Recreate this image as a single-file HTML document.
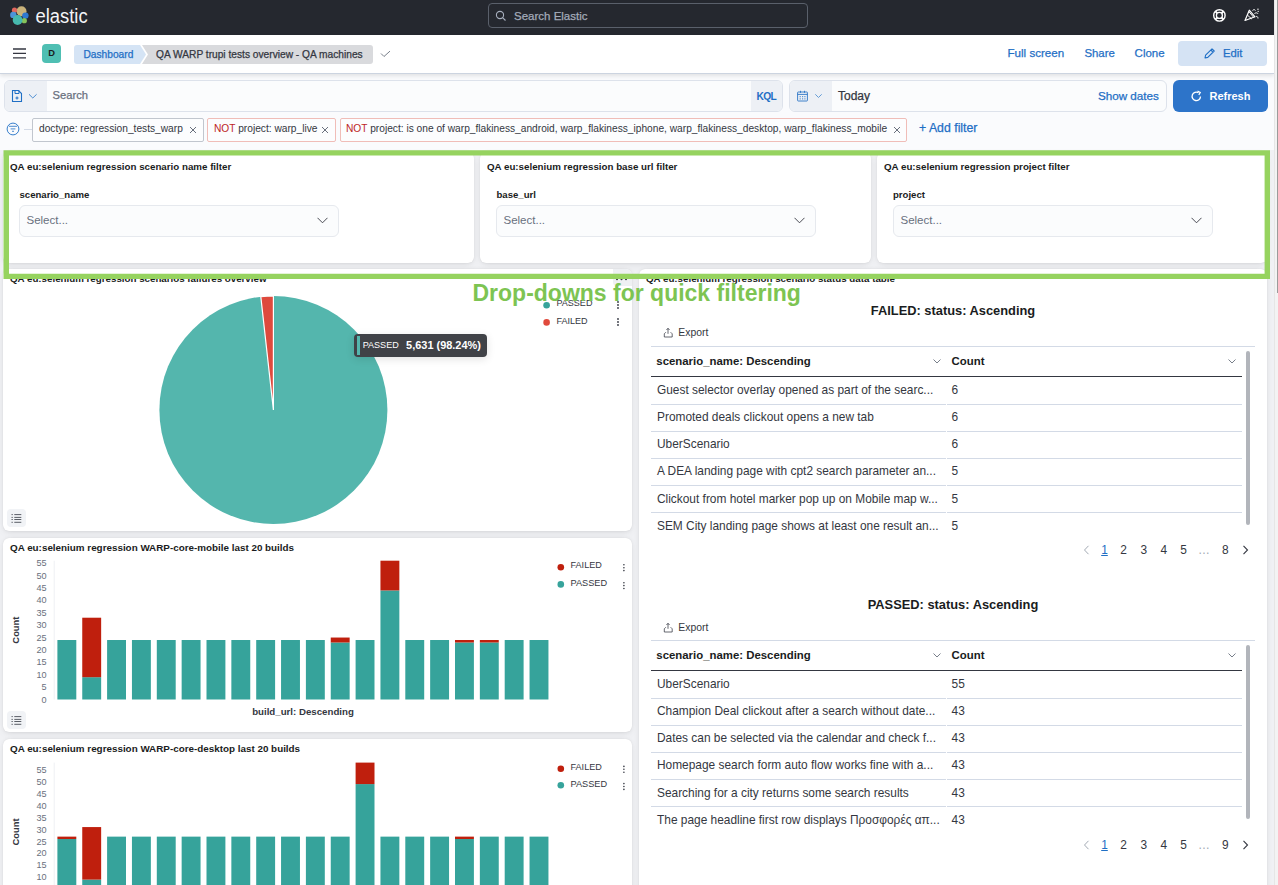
<!DOCTYPE html>
<html><head><meta charset="utf-8">
<style>
*{box-sizing:border-box;margin:0;padding:0}
html,body{width:1278px;height:885px;overflow:hidden}
body{position:relative;font-family:"Liberation Sans",sans-serif;background:#F0F1F4;color:#343741}
.a{position:absolute}
.nw{white-space:nowrap}
.panel{position:absolute;background:#fff;border-radius:6px;box-shadow:0 0.9px 4px -1px rgba(0,0,0,.08),0 2.6px 8px -1px rgba(0,0,0,.06),0 0 1px rgba(0,0,0,.1)}
.ptitle{position:absolute;font-size:9.75px;font-weight:700;color:#1A1C21;white-space:nowrap;line-height:14px}
.lbl{position:absolute;font-size:9.6px;font-weight:700;color:#1A1C21;white-space:nowrap;line-height:14px}
.sel{position:absolute;width:320px;height:31.5px;background:#FBFCFD;border:1px solid #E6E9EE;border-radius:6px}
.sel span{position:absolute;left:6.5px;top:7.2px;font-size:11.5px;color:#69707D;line-height:15px}
.sel svg{position:absolute;right:10px;top:11px}
.blue{color:#0B64B4}
.med{-webkit-text-stroke:0.25px currentColor}
</style></head><body>

<!-- ===== Top dark header ===== -->
<div class="a" style="left:0;top:0;width:1274px;height:35px;background:#25282F"></div>
<svg class="a" style="left:9px;top:5px" width="22" height="22" viewBox="0 0 22 22">
  <circle cx="12.5" cy="6.3" r="5" fill="#C9B27A"/>
  <circle cx="5.5" cy="5.2" r="2.6" fill="#E0675E"/>
  <circle cx="4.3" cy="9.9" r="3.2" fill="#4D93D9"/>
  <circle cx="16.4" cy="10.6" r="3.2" fill="#2F78D0"/>
  <circle cx="15.3" cy="15.7" r="2.6" fill="#86C35A"/>
  <circle cx="8.6" cy="15" r="4.9" fill="#47B9AE"/>
</svg>
<div class="a nw" style="left:35.5px;top:5.6px;font-size:18.4px;line-height:22px;color:#F4F5F7;transform:scaleY(1.13);transform-origin:0 17.4px">elastic</div>
<div class="a" style="left:488px;top:3px;width:320px;height:25px;border:1px solid #5A606B;border-radius:4px;background:#25282F"></div>
<svg class="a" style="left:495px;top:10px" width="12" height="12" viewBox="0 0 12 12"><circle cx="5" cy="5" r="3.6" fill="none" stroke="#A7AFBE" stroke-width="1.1"/><path d="M7.6 7.6L10.5 10.5" stroke="#A7AFBE" stroke-width="1.1"/></svg>
<div class="a nw med" style="left:514px;top:9px;font-size:11.5px;line-height:15px;color:#A3ABB9">Search Elastic</div>
<!-- help icon -->
<svg class="a" style="left:1211px;top:6.5px" width="17" height="17" viewBox="0 0 17 17"><circle cx="8.4" cy="8.4" r="5.7" fill="none" stroke="#fff" stroke-width="1.4"/><circle cx="8.4" cy="8.4" r="3" fill="none" stroke="#fff" stroke-width="1.3"/><path d="M4.4 4.4L6.3 6.3M12.4 4.4L10.5 6.3M4.4 12.4L6.3 10.5M12.4 12.4L10.5 10.5" stroke="#fff" stroke-width="2"/></svg>
<!-- newsfeed icon -->
<svg class="a" style="left:1244px;top:8px" width="16" height="14" viewBox="0 0 16 14"><path d="M1 12.5L5.3 2.2L11 8.8Z" fill="none" stroke="#fff" stroke-width="1.2" stroke-linejoin="round"/><path d="M3.3 7L7.8 11M4.8 3.5L9.8 9.5" fill="none" stroke="#fff" stroke-width="1"/><path d="M8.5 2.5C9.5 1.3 11 1.5 11.5 2.5M10.5 5.5C12 4.5 13.5 4.7 14 5.8M12 8.5C13 8.2 14 8.8 14 10.5M13.2 1.2h1.5M13.6 3.4h1.2" fill="none" stroke="#fff" stroke-width="1"/></svg>

<!-- ===== Nav bar ===== -->
<div class="a" style="left:0;top:74px;width:1274px;height:76px;background:#FAFBFD"></div>
<div class="a" style="left:0;top:35px;width:1274px;height:39px;background:#fff;border-bottom:1px solid #CCD4E0;box-shadow:0 2px 4px rgba(0,0,0,.1)"></div>
<svg class="a" style="left:12px;top:45px" width="16" height="16" viewBox="0 0 16 16"><path d="M1 4H14M1 8.3H14M1 12.8H14" stroke="#343741" stroke-width="1.3"/></svg>
<div class="a" style="left:42px;top:44px;width:19px;height:19px;border-radius:4px;background:#4FBFB3;color:#1A1C21;font-size:9.3px;font-weight:700;text-align:center;line-height:19.5px">D</div>
<svg class="a" style="left:74px;top:45px" width="300" height="19" viewBox="0 0 300 19">
  <path d="M3 0H66L72 9.5L66 19H3A3 3 0 0 1 0 16V3A3 3 0 0 1 3 0Z" fill="#D5E4F5"/>
  <path d="M68 0H296A3 3 0 0 1 299 3V16A3 3 0 0 1 296 19H68L74 9.5Z" fill="#D9DADD"/>
</svg>
<div class="a nw blue med" style="left:83.5px;top:46.5px;font-size:10.2px;line-height:15px;color:#1F6FC5">Dashboard</div>
<div class="a nw med" style="left:156px;top:46.5px;font-size:10.2px;line-height:15px;color:#343741">QA WARP trupi tests overview - QA machines</div>
<svg class="a" style="left:380px;top:48px" width="11" height="10" viewBox="0 0 11 10"><path d="M1 5.5L4 8.5L10 3.1" fill="none" stroke="#69707D" stroke-width="0.9"/></svg>
<div class="a nw blue med" style="left:1007.5px;top:45px;font-size:11.6px;line-height:15px;color:#1F6FC5">Full screen</div>
<div class="a nw blue med" style="left:1084.4px;top:46px;font-size:11.4px;line-height:15px;color:#1F6FC5">Share</div>
<div class="a nw blue med" style="left:1134.6px;top:46px;font-size:11.5px;line-height:15px;color:#1F6FC5">Clone</div>
<div class="a" style="left:1178px;top:41px;width:89px;height:25px;border-radius:4px;background:#D5E3F4"></div>
<svg class="a" style="left:1203px;top:47px" width="13" height="13" viewBox="0 0 13 13"><path d="M2 11L2.6 8.2L9 1.8L11.2 4L4.8 10.4Z M7.8 3L10 5.2" fill="none" stroke="#1F6FC5" stroke-width="1.1" stroke-linejoin="round"/></svg>
<div class="a nw blue med" style="left:1222.9px;top:46px;font-size:11.3px;line-height:15px;color:#1F6FC5">Edit</div>

<!-- ===== Query bar ===== -->

<div class="a" style="left:3.5px;top:80px;width:779px;height:31.5px;border:1px solid #DDE2EB;border-radius:6px;background:#FBFCFD;overflow:hidden">
  <div class="a" style="left:0;top:0;width:42px;height:30px;background:#EDF0F5"></div>
  <div class="a" style="left:746px;top:0;width:32px;height:30px;background:#EDF0F5"></div>
</div>
<svg class="a" style="left:11px;top:89px" width="28" height="14" viewBox="0 0 28 14"><path d="M1.5 1.5H7.5L10.5 4.5V12.5H1.5Z" fill="none" stroke="#1F6FC5" stroke-width="1.1"/><path d="M4 1.5V4.5H8V1.5M6 7.5V10.5M4.5 9H7.5" fill="none" stroke="#1F6FC5" stroke-width="1"/><path d="M18 5.3L21.8 9L25.6 5.3" fill="none" stroke="#4E8ED2" stroke-width="1"/></svg>
<div class="a nw med" style="left:52.6px;top:87.6px;font-size:11.2px;line-height:15px;color:#69707D">Search</div>
<div class="a nw" style="left:756.6px;top:90.6px;font-size:10.2px;font-weight:700;line-height:12px;letter-spacing:-0.75px;color:#1F6FC5">KQL</div>
<div class="a" style="left:789px;top:80px;width:377.5px;height:31.5px;border:1px solid #DDE2EB;border-radius:6px;background:#FBFCFD;overflow:hidden">
  <div class="a" style="left:0;top:0;width:42px;height:30px;background:#EDF0F5"></div>
</div>
<svg class="a" style="left:796px;top:89px" width="30" height="14" viewBox="0 0 30 14"><rect x="1.6" y="3" width="9.8" height="9" rx="0.6" fill="none" stroke="#2A74C6" stroke-width="0.9"/><path d="M1.6 5.4H11.4M4.5 1.8V3.8M8.5 1.8V3.8" stroke="#2A74C6" stroke-width="0.9"/><path d="M3.6 7.7h1.2M6 7.7h1.2M8.3 7.7h1.2M3.6 9.9h1.2M6 9.9h1.2M8.3 9.9h1.2" stroke="#2A74C6" stroke-width="0.9"/><path d="M19.3 5.3L22.5 8.5L25.7 5.3" fill="none" stroke="#5592D3" stroke-width="0.9"/></svg>
<div class="a nw med" style="left:838px;top:89px;font-size:12px;line-height:15px;color:#343741">Today</div>
<div class="a nw med" style="left:1097.9px;top:88.2px;font-size:11.7px;line-height:15px;color:#1F6FC5">Show dates</div>
<div class="a" style="left:1173px;top:80px;width:95px;height:31.5px;border-radius:6px;background:#2D74C9"></div>
<svg class="a" style="left:1190px;top:89.5px" width="13" height="13" viewBox="0 0 13 13"><path d="M10.5 6.5A4.2 4.2 0 1 1 8.5 2.8" fill="none" stroke="#fff" stroke-width="1.3"/><path d="M7.5 1L10.3 2.4L8.8 5" fill="none" stroke="#fff" stroke-width="1.2"/></svg>
<div class="a nw" style="left:1209.5px;top:88.5px;font-size:11px;font-weight:700;line-height:15px;color:#fff">Refresh</div>

<!-- filters row -->
<svg class="a" style="left:6px;top:121.5px" width="14" height="14" viewBox="0 0 14 14"><circle cx="7" cy="7" r="5.9" fill="none" stroke="#1F6FC5" stroke-width="0.9"/><path d="M3 4.3H11M4.6 6.9H9.4M6 9.3H8" stroke="#1F6FC5" stroke-width="0.8"/></svg>
<div class="a" style="left:24px;top:128.5px;width:8px;height:1px;background:#D3DAE6"></div>
<div class="a" style="left:32px;top:118px;width:171.5px;height:23.5px;border:1px solid #C1C6CE;border-radius:2px;background:#FCFDFE"></div>
<div class="a nw" style="left:39px;top:122px;font-size:10.2px;line-height:14px;color:#343741">doctype: regression_tests_warp</div>
<div class="a" style="left:207px;top:118px;width:128.5px;height:23.5px;border:1px solid #F0BDB8;border-radius:2px;background:#FCFDFE"></div>
<div class="a nw" style="left:214px;top:122px;font-size:10.2px;line-height:14px;color:#343741"><span style="color:#BD271E">NOT</span> project: warp_live</div>
<div class="a" style="left:340px;top:118px;width:567px;height:23.5px;border:1px solid #F0BDB8;border-radius:2px;background:#FCFDFE"></div>
<div class="a nw" style="left:346px;top:122px;font-size:10.2px;line-height:14px;color:#343741"><span style="color:#BD271E">NOT</span> project: is one of warp_flakiness_android, warp_flakiness_iphone, warp_flakiness_desktop, warp_flakiness_mobile</div>
<svg class="a" style="left:189px;top:125.5px" width="8" height="8" viewBox="0 0 8 8"><path d="M1 1L7 7M7 1L1 7" stroke="#69707D" stroke-width="1"/></svg>
<svg class="a" style="left:321px;top:125.5px" width="8" height="8" viewBox="0 0 8 8"><path d="M1 1L7 7M7 1L1 7" stroke="#69707D" stroke-width="1"/></svg>
<svg class="a" style="left:893px;top:125.5px" width="8" height="8" viewBox="0 0 8 8"><path d="M1 1L7 7M7 1L1 7" stroke="#69707D" stroke-width="1"/></svg>
<div class="a nw med" style="left:919px;top:121.3px;font-size:12.3px;line-height:14px;color:#1F6FC5">+ Add filter</div>

<!-- page scrollbar -->
<div class="a" style="left:1274px;top:0;width:4px;height:885px;background:#F3F3F3;border-left:1px solid #E6E6E6"></div>
<div class="a" style="left:1276.5px;top:0px;width:1.5px;height:293px;background:#9B9B9B"></div>

<!-- ===== Filter control panels ===== -->
<div class="panel" style="left:3px;top:152px;width:471px;height:111px"></div>
<div class="panel" style="left:480px;top:152px;width:391px;height:111px"></div>
<div class="panel" style="left:877px;top:152px;width:390px;height:111px"></div>
<div class="ptitle" style="left:10px;top:159.7px">QA eu:selenium regression scenario name filter</div>
<div class="ptitle" style="left:487px;top:159.7px">QA eu:selenium regression base url filter</div>
<div class="ptitle" style="left:884px;top:159.7px">QA eu:selenium regression project filter</div>
<div class="lbl" style="left:19.5px;top:188px">scenario_name</div>
<div class="lbl" style="left:496.5px;top:188px">base_url</div>
<div class="lbl" style="left:893px;top:188px">project</div>
<div class="sel" style="left:19px;top:205px"><span>Select...</span><svg width="11" height="7" viewBox="0 0 11 7"><path d="M0.5 0.8L5.5 5.8L10.5 0.8" fill="none" stroke="#343741" stroke-width="0.9"/></svg></div>
<div class="sel" style="left:496px;top:205px"><span>Select...</span><svg width="11" height="7" viewBox="0 0 11 7"><path d="M0.5 0.8L5.5 5.8L10.5 0.8" fill="none" stroke="#343741" stroke-width="0.9"/></svg></div>
<div class="sel" style="left:893px;top:205px"><span>Select...</span><svg width="11" height="7" viewBox="0 0 11 7"><path d="M0.5 0.8L5.5 5.8L10.5 0.8" fill="none" stroke="#343741" stroke-width="0.9"/></svg></div>

<!-- PANELS_ROW2 -->
<div class="panel" style="left:3px;top:269px;width:629px;height:262px"></div>
<div class="ptitle" style="left:10px;top:271.5px">QA eu:selenium regression scenarios failures overview</div>
<svg class="a" style="left:0;top:0" width="640" height="540" viewBox="0 0 640 540"><circle cx="273.4" cy="410" r="114" fill="#54B6AD"/><path d="M273.4 410L260.82 296.70A114 114 0 0 1 273.4 296Z" fill="#DE4A3D" stroke="#fff" stroke-width="1.2"/><circle cx="546.6" cy="305.3" r="3.3" fill="#36A39B"/><circle cx="546.6" cy="322.4" r="3.3" fill="#E04A3C"/><g fill="#343741"><circle cx="618" cy="302" r="0.9"/><circle cx="618" cy="305" r="0.9"/><circle cx="618" cy="308" r="0.9"/><circle cx="618" cy="319" r="0.9"/><circle cx="618" cy="322" r="0.9"/><circle cx="618" cy="325" r="0.9"/></g></svg>
<div class="a nw" style="left:556.4px;top:297.3px;font-size:9.05px;line-height:13px;color:#343741">PASSED</div>
<div class="a nw" style="left:556.4px;top:314.5px;font-size:9.05px;line-height:13px;color:#343741">FAILED</div>
<div class="a" style="left:613px;top:269px;width:19px;height:17px;background:#EEF0F3;border-radius:0 6px 0 4px"></div><svg class="a" style="left:612px;top:276px" width="20" height="6" viewBox="0 0 20 6"><g fill="#343741"><circle cx="5" cy="3.3" r="1"/><circle cx="9.5" cy="3.3" r="1"/><circle cx="14" cy="3.3" r="1"/></g></svg>
<div class="a" style="left:7px;top:509px;width:19px;height:18px;background:#F1F3F6;border-radius:4px"></div>
<svg class="a" style="left:11px;top:513px" width="11" height="10" viewBox="0 0 11 10"><path d="M0.5 1.6h1.3M0.5 4.4h1.3M0.5 6.5h1.3M0.5 9.3h1.3M3.3 1.6h7M3.3 4.4h7M3.3 6.5h7M3.3 9.3h7" stroke="#343741" stroke-width="0.8"/></svg>
<div class="a" style="left:354.2px;top:334px;width:133px;height:23.4px;background:#404247;border-radius:4px;box-shadow:0 2px 8px rgba(0,0,0,.12)"></div>
<div class="a" style="left:356.5px;top:336.2px;width:3.5px;height:18.8px;background:#54B6AD"></div>
<div class="a nw" style="left:362.7px;top:339px;font-size:9.05px;line-height:13px;color:#fff">PASSED</div>
<div class="a nw" style="left:406.1px;top:339px;font-size:10.95px;font-weight:700;line-height:13px;color:#fff">5,631 (98.24%)</div>
<div class="panel" style="left:3px;top:538.2px;width:629px;height:194px"></div><div class="ptitle" style="left:10px;top:540.6px;font-size:9.85px">QA eu:selenium regression WARP-core-mobile last 20 builds</div><svg class="a" style="left:0;top:0" width="640" height="885" viewBox="0 0 640 885"><line x1="54.2" y1="560.7" x2="54.2" y2="699.5" stroke="#EEF0F3" stroke-width="1"/><rect x="57.40" y="640.01" width="18.9" height="59.49" fill="#36A39B"/><rect x="82.25" y="677.19" width="18.9" height="22.31" fill="#36A39B"/><rect x="82.25" y="617.71" width="18.9" height="59.49" fill="#BF1F0D"/><rect x="107.10" y="640.01" width="18.9" height="59.49" fill="#36A39B"/><rect x="131.95" y="640.01" width="18.9" height="59.49" fill="#36A39B"/><rect x="156.80" y="640.01" width="18.9" height="59.49" fill="#36A39B"/><rect x="181.65" y="640.01" width="18.9" height="59.49" fill="#36A39B"/><rect x="206.50" y="640.01" width="18.9" height="59.49" fill="#36A39B"/><rect x="231.35" y="640.01" width="18.9" height="59.49" fill="#36A39B"/><rect x="256.20" y="640.01" width="18.9" height="59.49" fill="#36A39B"/><rect x="281.05" y="640.01" width="18.9" height="59.49" fill="#36A39B"/><rect x="305.90" y="640.01" width="18.9" height="59.49" fill="#36A39B"/><rect x="330.75" y="642.49" width="18.9" height="57.01" fill="#36A39B"/><rect x="330.75" y="637.54" width="18.9" height="4.96" fill="#BF1F0D"/><rect x="355.60" y="640.01" width="18.9" height="59.49" fill="#36A39B"/><rect x="380.45" y="590.44" width="18.9" height="109.06" fill="#36A39B"/><rect x="380.45" y="560.70" width="18.9" height="29.74" fill="#BF1F0D"/><rect x="405.30" y="640.01" width="18.9" height="59.49" fill="#36A39B"/><rect x="430.15" y="640.01" width="18.9" height="59.49" fill="#36A39B"/><rect x="455.00" y="642.49" width="18.9" height="57.01" fill="#36A39B"/><rect x="455.00" y="640.01" width="18.9" height="2.48" fill="#BF1F0D"/><rect x="479.85" y="642.49" width="18.9" height="57.01" fill="#36A39B"/><rect x="479.85" y="640.01" width="18.9" height="2.48" fill="#BF1F0D"/><rect x="504.70" y="640.01" width="18.9" height="59.49" fill="#36A39B"/><rect x="529.55" y="640.01" width="18.9" height="59.49" fill="#36A39B"/><g font-family="Liberation Sans" font-size="9.1" fill="#69707D"><text x="46.5" y="566.28" text-anchor="end">55</text><text x="46.5" y="578.67" text-anchor="end">50</text><text x="46.5" y="591.06" text-anchor="end">45</text><text x="46.5" y="603.46" text-anchor="end">40</text><text x="46.5" y="615.85" text-anchor="end">35</text><text x="46.5" y="628.24" text-anchor="end">30</text><text x="46.5" y="640.64" text-anchor="end">25</text><text x="46.5" y="653.03" text-anchor="end">20</text><text x="46.5" y="665.42" text-anchor="end">15</text><text x="46.5" y="677.81" text-anchor="end">10</text><text x="46.5" y="690.21" text-anchor="end">5</text><text x="46.5" y="702.60" text-anchor="end">0</text></g><text transform="translate(18.6,630.1) rotate(-90)" text-anchor="middle" font-family="Liberation Sans" font-size="9.4" font-weight="700" fill="#343741">Count</text><circle cx="560.8" cy="567.20" r="3.3" fill="#BF1F0D"/><circle cx="560.8" cy="584.40" r="3.3" fill="#36A39B"/><g fill="#343741"><circle cx="623.9" cy="564.80" r="0.8"/><circle cx="623.9" cy="567.70" r="0.8"/><circle cx="623.9" cy="570.60" r="0.8"/><circle cx="623.9" cy="582.70" r="0.8"/><circle cx="623.9" cy="585.60" r="0.8"/><circle cx="623.9" cy="588.50" r="0.8"/></g><text x="303" y="715.3" text-anchor="middle" font-family="Liberation Sans" font-size="9.7" font-weight="700" fill="#343741">build_url: Descending</text></svg><div class="a nw" style="left:570.5px;top:559.3px;font-size:9.1px;line-height:13px;color:#343741">FAILED</div><div class="a nw" style="left:570.5px;top:577.2px;font-size:9.2px;line-height:13px;color:#343741">PASSED</div>
<div class="a" style="left:7px;top:711px;width:19px;height:18px;background:#F1F3F6;border-radius:4px"></div>
<svg class="a" style="left:11px;top:715px" width="11" height="10" viewBox="0 0 11 10"><path d="M0.5 1.6h1.3M0.5 4.4h1.3M0.5 6.5h1.3M0.5 9.3h1.3M3.3 1.6h7M3.3 4.4h7M3.3 6.5h7M3.3 9.3h7" stroke="#343741" stroke-width="0.8"/></svg>
<div class="panel" style="left:3px;top:738.6px;width:629px;height:194px"></div><div class="ptitle" style="left:10px;top:741.8px;font-size:9.85px">QA eu:selenium regression WARP-core-desktop last 20 builds</div><svg class="a" style="left:0;top:0" width="640" height="885" viewBox="0 0 640 885"><line x1="54.2" y1="762.6" x2="54.2" y2="901.1" stroke="#EEF0F3" stroke-width="1"/><rect x="57.40" y="839.01" width="18.9" height="62.09" fill="#36A39B"/><rect x="57.40" y="836.63" width="18.9" height="2.39" fill="#BF1F0D"/><rect x="82.25" y="879.61" width="18.9" height="21.49" fill="#36A39B"/><rect x="82.25" y="827.07" width="18.9" height="52.53" fill="#BF1F0D"/><rect x="107.10" y="836.63" width="18.9" height="64.47" fill="#36A39B"/><rect x="131.95" y="836.63" width="18.9" height="64.47" fill="#36A39B"/><rect x="156.80" y="836.63" width="18.9" height="64.47" fill="#36A39B"/><rect x="181.65" y="836.63" width="18.9" height="64.47" fill="#36A39B"/><rect x="206.50" y="836.63" width="18.9" height="64.47" fill="#36A39B"/><rect x="231.35" y="836.63" width="18.9" height="64.47" fill="#36A39B"/><rect x="256.20" y="836.63" width="18.9" height="64.47" fill="#36A39B"/><rect x="281.05" y="836.63" width="18.9" height="64.47" fill="#36A39B"/><rect x="305.90" y="836.63" width="18.9" height="64.47" fill="#36A39B"/><rect x="330.75" y="836.63" width="18.9" height="64.47" fill="#36A39B"/><rect x="355.60" y="784.09" width="18.9" height="117.01" fill="#36A39B"/><rect x="355.60" y="762.60" width="18.9" height="21.49" fill="#BF1F0D"/><rect x="380.45" y="836.63" width="18.9" height="64.47" fill="#36A39B"/><rect x="405.30" y="836.63" width="18.9" height="64.47" fill="#36A39B"/><rect x="430.15" y="836.63" width="18.9" height="64.47" fill="#36A39B"/><rect x="455.00" y="839.01" width="18.9" height="62.09" fill="#36A39B"/><rect x="455.00" y="836.63" width="18.9" height="2.39" fill="#BF1F0D"/><rect x="479.85" y="836.63" width="18.9" height="64.47" fill="#36A39B"/><rect x="504.70" y="836.63" width="18.9" height="64.47" fill="#36A39B"/><rect x="529.55" y="836.63" width="18.9" height="64.47" fill="#36A39B"/><g font-family="Liberation Sans" font-size="9.1" fill="#69707D"><text x="46.5" y="772.86" text-anchor="end">55</text><text x="46.5" y="784.80" text-anchor="end">50</text><text x="46.5" y="796.74" text-anchor="end">45</text><text x="46.5" y="808.68" text-anchor="end">40</text><text x="46.5" y="820.62" text-anchor="end">35</text><text x="46.5" y="832.56" text-anchor="end">30</text><text x="46.5" y="844.50" text-anchor="end">25</text><text x="46.5" y="856.44" text-anchor="end">20</text><text x="46.5" y="868.38" text-anchor="end">15</text><text x="46.5" y="880.32" text-anchor="end">10</text><text x="46.5" y="892.26" text-anchor="end">5</text><text x="46.5" y="904.20" text-anchor="end">0</text></g><text transform="translate(18.6,831.9) rotate(-90)" text-anchor="middle" font-family="Liberation Sans" font-size="9.4" font-weight="700" fill="#343741">Count</text><circle cx="560.8" cy="768.80" r="3.3" fill="#BF1F0D"/><circle cx="560.8" cy="785.30" r="3.3" fill="#36A39B"/><g fill="#343741"><circle cx="623.9" cy="766.40" r="0.8"/><circle cx="623.9" cy="769.30" r="0.8"/><circle cx="623.9" cy="772.20" r="0.8"/><circle cx="623.9" cy="783.60" r="0.8"/><circle cx="623.9" cy="786.50" r="0.8"/><circle cx="623.9" cy="789.40" r="0.8"/></g></svg><div class="a nw" style="left:570.5px;top:760.9px;font-size:9.1px;line-height:13px;color:#343741">FAILED</div><div class="a nw" style="left:570.5px;top:778.1px;font-size:9.2px;line-height:13px;color:#343741">PASSED</div>
<div class="panel" style="left:639px;top:269px;width:628px;height:640px"></div>
<div class="ptitle" style="left:646px;top:271.5px">QA eu:selenium regression scenario status data table</div>
<div class="a nw" style="left:639px;width:628px;text-align:center;top:302.5px;font-size:12.85px;font-weight:700;line-height:16px;color:#1A1C21">FAILED: status: Ascending</div><svg class="a" style="left:662.5px;top:327.1px" width="11" height="11" viewBox="0 0 11 11"><path d="M5 1.3V6.8M3.4 3L5 1.3L6.6 3M2.9 5.2L1.3 6.8V10H9.2V6.8L7.6 5.2" fill="none" stroke="#343741" stroke-width="0.75"/></svg><div class="a nw" style="left:678.3px;top:326.1px;font-size:10.4px;line-height:13px;color:#343741">Export</div><div class="a" style="left:651px;top:346.1px;width:604px;height:1px;background:#D3DAE6"></div><div class="a nw" style="left:656.3px;top:354.3px;font-size:11.4px;font-weight:700;line-height:14px;color:#1A1C21">scenario_name: Descending</div><div class="a nw" style="left:951.6px;top:354.3px;font-size:11.4px;font-weight:700;line-height:14px;color:#1A1C21">Count</div><svg class="a" style="left:932.7px;top:358.8px" width="8" height="5" viewBox="0 0 8 5"><path d="M0.5 0.5L4 4L7.5 0.5" fill="none" stroke="#69707D" stroke-width="0.9"/></svg><svg class="a" style="left:1228.3px;top:358.8px" width="8" height="5" viewBox="0 0 8 5"><path d="M0.5 0.5L4 4L7.5 0.5" fill="none" stroke="#69707D" stroke-width="0.9"/></svg><div class="a" style="left:651px;top:375.9px;width:591px;height:1.2px;background:#343741"></div><div class="a nw" style="left:657px;top:383.3px;font-size:11.9px;line-height:14px;color:#343741">Guest selector overlay opened as part of the searc...</div><div class="a nw" style="left:951.6px;top:383.3px;font-size:11.9px;line-height:14px;color:#343741">6</div><div class="a nw" style="left:657px;top:410.1px;font-size:11.9px;line-height:14px;color:#343741">Promoted deals clickout opens a new tab</div><div class="a nw" style="left:951.6px;top:410.1px;font-size:11.9px;line-height:14px;color:#343741">6</div><div class="a nw" style="left:657px;top:437.0px;font-size:11.9px;line-height:14px;color:#343741">UberScenario</div><div class="a nw" style="left:951.6px;top:437.0px;font-size:11.9px;line-height:14px;color:#343741">6</div><div class="a nw" style="left:657px;top:464.0px;font-size:11.9px;line-height:14px;color:#343741">A DEA landing page with cpt2 search parameter an...</div><div class="a nw" style="left:951.6px;top:464.0px;font-size:11.9px;line-height:14px;color:#343741">5</div><div class="a nw" style="left:657px;top:491.8px;font-size:11.9px;line-height:14px;color:#343741">Clickout from hotel marker pop up on Mobile map w...</div><div class="a nw" style="left:951.6px;top:491.8px;font-size:11.9px;line-height:14px;color:#343741">5</div><div class="a nw" style="left:657px;top:518.8px;font-size:11.9px;line-height:14px;color:#343741">SEM City landing page shows at least one result an...</div><div class="a nw" style="left:951.6px;top:518.8px;font-size:11.9px;line-height:14px;color:#343741">5</div><div class="a" style="left:651px;top:403.8px;width:295px;height:1px;background:#D3DAE6"></div><div class="a" style="left:947px;top:403.8px;width:294.5px;height:1px;background:#D3DAE6"></div><div class="a" style="left:651px;top:430.6px;width:295px;height:1px;background:#D3DAE6"></div><div class="a" style="left:947px;top:430.6px;width:294.5px;height:1px;background:#D3DAE6"></div><div class="a" style="left:651px;top:458.0px;width:295px;height:1px;background:#D3DAE6"></div><div class="a" style="left:947px;top:458.0px;width:294.5px;height:1px;background:#D3DAE6"></div><div class="a" style="left:651px;top:484.9px;width:295px;height:1px;background:#D3DAE6"></div><div class="a" style="left:947px;top:484.9px;width:294.5px;height:1px;background:#D3DAE6"></div><div class="a" style="left:651px;top:511.7px;width:295px;height:1px;background:#D3DAE6"></div><div class="a" style="left:947px;top:511.7px;width:294.5px;height:1px;background:#D3DAE6"></div><div class="a" style="left:1246px;top:351px;width:3.900000000000091px;height:173.60000000000002px;border-radius:3px;background:#B2B5BB"></div><svg class="a" style="left:1083px;top:544.7px" width="7" height="10" viewBox="0 0 7 10"><path d="M5.5 0.8L1.5 5L5.5 9.2" fill="none" stroke="#A2A9B3" stroke-width="1"/></svg><svg class="a" style="left:1241.5px;top:544.7px" width="7" height="10" viewBox="0 0 7 10"><path d="M1.5 0.8L5.5 5L1.5 9.2" fill="none" stroke="#343741" stroke-width="1.1"/></svg><div class="a nw" style="left:1094.5px;width:20px;text-align:center;top:542.7px;font-size:11.9px;line-height:14px;color:#1F6FC5;text-decoration:underline;">1</div><div class="a nw" style="left:1113.6px;width:20px;text-align:center;top:542.7px;font-size:11.9px;line-height:14px;color:#343741;">2</div><div class="a nw" style="left:1133.8px;width:20px;text-align:center;top:542.7px;font-size:11.9px;line-height:14px;color:#343741;">3</div><div class="a nw" style="left:1153.8px;width:20px;text-align:center;top:542.7px;font-size:11.9px;line-height:14px;color:#343741;">4</div><div class="a nw" style="left:1173.6px;width:20px;text-align:center;top:542.7px;font-size:11.9px;line-height:14px;color:#343741;">5</div><div class="a nw" style="left:1194px;width:20px;text-align:center;top:542.7px;font-size:11.9px;line-height:14px;color:#A2A9B3;">…</div><div class="a nw" style="left:1215.3px;width:20px;text-align:center;top:542.7px;font-size:11.9px;line-height:14px;color:#343741;">8</div>
<div class="a nw" style="left:639px;width:628px;text-align:center;top:596.5px;font-size:12.85px;font-weight:700;line-height:16px;color:#1A1C21">PASSED: status: Ascending</div><svg class="a" style="left:662.5px;top:622.1px" width="11" height="11" viewBox="0 0 11 11"><path d="M5 1.3V6.8M3.4 3L5 1.3L6.6 3M2.9 5.2L1.3 6.8V10H9.2V6.8L7.6 5.2" fill="none" stroke="#343741" stroke-width="0.75"/></svg><div class="a nw" style="left:678.3px;top:621.1px;font-size:10.4px;line-height:13px;color:#343741">Export</div><div class="a" style="left:651px;top:639.8px;width:604px;height:1px;background:#D3DAE6"></div><div class="a nw" style="left:656.3px;top:648.1px;font-size:11.4px;font-weight:700;line-height:14px;color:#1A1C21">scenario_name: Descending</div><div class="a nw" style="left:951.6px;top:648.1px;font-size:11.4px;font-weight:700;line-height:14px;color:#1A1C21">Count</div><svg class="a" style="left:932.7px;top:652.6px" width="8" height="5" viewBox="0 0 8 5"><path d="M0.5 0.5L4 4L7.5 0.5" fill="none" stroke="#69707D" stroke-width="0.9"/></svg><svg class="a" style="left:1228.3px;top:652.6px" width="8" height="5" viewBox="0 0 8 5"><path d="M0.5 0.5L4 4L7.5 0.5" fill="none" stroke="#69707D" stroke-width="0.9"/></svg><div class="a" style="left:651px;top:670.0px;width:591px;height:1.2px;background:#343741"></div><div class="a nw" style="left:657px;top:676.9px;font-size:11.9px;line-height:14px;color:#343741">UberScenario</div><div class="a nw" style="left:951.6px;top:676.9px;font-size:11.9px;line-height:14px;color:#343741">55</div><div class="a nw" style="left:657px;top:704.0px;font-size:11.9px;line-height:14px;color:#343741">Champion Deal clickout after a search without date...</div><div class="a nw" style="left:951.6px;top:704.0px;font-size:11.9px;line-height:14px;color:#343741">43</div><div class="a nw" style="left:657px;top:731.0px;font-size:11.9px;line-height:14px;color:#343741">Dates can be selected via the calendar and check f...</div><div class="a nw" style="left:951.6px;top:731.0px;font-size:11.9px;line-height:14px;color:#343741">43</div><div class="a nw" style="left:657px;top:758.0px;font-size:11.9px;line-height:14px;color:#343741">Homepage search form auto flow works fine with a...</div><div class="a nw" style="left:951.6px;top:758.0px;font-size:11.9px;line-height:14px;color:#343741">43</div><div class="a nw" style="left:657px;top:785.8px;font-size:11.9px;line-height:14px;color:#343741">Searching for a city returns some search results</div><div class="a nw" style="left:951.6px;top:785.8px;font-size:11.9px;line-height:14px;color:#343741">43</div><div class="a nw" style="left:657px;top:812.8px;font-size:11.9px;line-height:14px;color:#343741">The page headline first row displays Προσφορές απ...</div><div class="a nw" style="left:951.6px;top:812.8px;font-size:11.9px;line-height:14px;color:#343741">43</div><div class="a" style="left:651px;top:697.8px;width:295px;height:1px;background:#D3DAE6"></div><div class="a" style="left:947px;top:697.8px;width:294.5px;height:1px;background:#D3DAE6"></div><div class="a" style="left:651px;top:724.8px;width:295px;height:1px;background:#D3DAE6"></div><div class="a" style="left:947px;top:724.8px;width:294.5px;height:1px;background:#D3DAE6"></div><div class="a" style="left:651px;top:751.9px;width:295px;height:1px;background:#D3DAE6"></div><div class="a" style="left:947px;top:751.9px;width:294.5px;height:1px;background:#D3DAE6"></div><div class="a" style="left:651px;top:779.0px;width:295px;height:1px;background:#D3DAE6"></div><div class="a" style="left:947px;top:779.0px;width:294.5px;height:1px;background:#D3DAE6"></div><div class="a" style="left:651px;top:806.2px;width:295px;height:1px;background:#D3DAE6"></div><div class="a" style="left:947px;top:806.2px;width:294.5px;height:1px;background:#D3DAE6"></div><div class="a" style="left:1246px;top:645px;width:3.900000000000091px;height:173.79999999999995px;border-radius:3px;background:#B2B5BB"></div><svg class="a" style="left:1083px;top:839.7px" width="7" height="10" viewBox="0 0 7 10"><path d="M5.5 0.8L1.5 5L5.5 9.2" fill="none" stroke="#A2A9B3" stroke-width="1"/></svg><svg class="a" style="left:1241.5px;top:839.7px" width="7" height="10" viewBox="0 0 7 10"><path d="M1.5 0.8L5.5 5L1.5 9.2" fill="none" stroke="#343741" stroke-width="1.1"/></svg><div class="a nw" style="left:1094.5px;width:20px;text-align:center;top:837.7px;font-size:11.9px;line-height:14px;color:#1F6FC5;text-decoration:underline;">1</div><div class="a nw" style="left:1113.6px;width:20px;text-align:center;top:837.7px;font-size:11.9px;line-height:14px;color:#343741;">2</div><div class="a nw" style="left:1133.8px;width:20px;text-align:center;top:837.7px;font-size:11.9px;line-height:14px;color:#343741;">3</div><div class="a nw" style="left:1153.8px;width:20px;text-align:center;top:837.7px;font-size:11.9px;line-height:14px;color:#343741;">4</div><div class="a nw" style="left:1173.6px;width:20px;text-align:center;top:837.7px;font-size:11.9px;line-height:14px;color:#343741;">5</div><div class="a nw" style="left:1194px;width:20px;text-align:center;top:837.7px;font-size:11.9px;line-height:14px;color:#A2A9B3;">…</div><div class="a nw" style="left:1215.3px;width:20px;text-align:center;top:837.7px;font-size:11.9px;line-height:14px;color:#343741;">9</div>
<!-- /PANELS_ROW2 -->

<!-- green highlight -->
<svg class="a" style="left:0;top:0" width="1278" height="300" viewBox="0 0 1278 300"><path fill-rule="evenodd" fill="#96D35F" d="M3.5 150.3H1270V278.9H3.5Z M9 155.6V273.8H1264.6V155.6Z"/></svg>
<div class="a nw" style="left:472.5px;top:280px;font-size:23px;font-weight:700;line-height:26px;color:#7DC452">Drop-downs for quick filtering</div>

</body></html>
